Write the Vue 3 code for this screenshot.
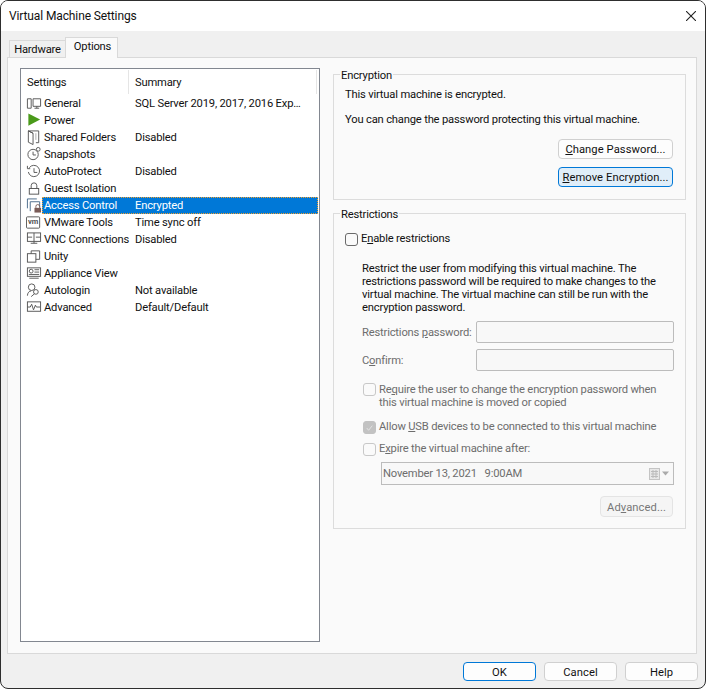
<script setup>
const rows = [
  { icon: 'general', name: 'General', summary: 'SQL Server 2019, 2017, 2016 Exp…' },
  { icon: 'power', name: 'Power', summary: '' },
  { icon: 'shared', name: 'Shared Folders', summary: 'Disabled' },
  { icon: 'snapshots', name: 'Snapshots', summary: '' },
  { icon: 'autoprotect', name: 'AutoProtect', summary: 'Disabled' },
  { icon: 'guest', name: 'Guest Isolation', summary: '' },
  { icon: 'access', name: 'Access Control', summary: 'Encrypted', selected: true },
  { icon: 'vmware', name: 'VMware Tools', summary: 'Time sync off' },
  { icon: 'vnc', name: 'VNC Connections', summary: 'Disabled' },
  { icon: 'unity', name: 'Unity', summary: '' },
  { icon: 'appliance', name: 'Appliance View', summary: '' },
  { icon: 'autologin', name: 'Autologin', summary: 'Not available' },
  { icon: 'advanced', name: 'Advanced', summary: 'Default/Default' },
]
</script>

<template>
  <div class="window">
    <header class="titlebar">
      <span class="title">Virtual Machine Settings</span>
      <svg class="close" width="10" height="10" viewBox="0 0 10 10">
        <path d="M0 0L10 10M10 0L0 10" stroke="#222" stroke-width="1.1" fill="none" />
      </svg>
    </header>

    <div class="body">
      <div class="tabs">
        <span class="tab">Hardware</span>
        <span class="tab active">Options</span>
      </div>

      <div class="panel">
        <div class="list">
          <div class="list-head">
            <span class="col-name">Settings</span>
            <span class="col-summary">Summary</span>
          </div>
          <div v-for="row in rows" :key="row.name" class="row">
            <span class="icon">
              <svg width="17" height="17" viewBox="0 0 17 17" fill="none" stroke="#555" stroke-width="1">
                <g v-if="row.icon === 'general'">
                  <path d="M1.500 3.500h4v10h-4zM7.500 3.500h8v8h-8zM9 13.500h5" />
                  <path d="M11.500 11.500v2" />
                </g>
                <path v-else-if="row.icon === 'power'" d="M2.500 1L15 7.500L2.500 14z" fill="#4a9a1a" stroke="none" />
                <g v-else-if="row.icon === 'shared'">
                  <path d="M2.500 1.500h11v12.500h-3M2.500 1.500v12l5 2.500v-12zM2.500 1.500l5 2.500" />
                  <path d="M10.500 4v7" stroke="#aaa" />
                </g>
                <g v-else-if="row.icon === 'snapshots'">
                  <circle cx="7.500" cy="8.500" r="5.500" />
                  <path d="M7.500 5.500v3.500h3" />
                  <circle cx="13" cy="3" r="2" fill="#fff" />
                </g>
                <g v-else-if="row.icon === 'autoprotect'">
                  <path d="M3.500 4.500A6 6 0 1 1 2.500 9M1.500 2.500v3h3" />
                  <path d="M8.500 5v4.500h3.500" />
                </g>
                <g v-else-if="row.icon === 'guest'">
                  <rect x="3.500" y="8.500" width="10" height="6" />
                  <path d="M5.500 8.500V5.500a3 3 0 0 1 6 0v3" />
                </g>
                <g v-else-if="row.icon === 'access'">
                  <path d="M1.500 11.500v-10h10M4.500 14.500v-10h10v6" stroke="#4a6a8a" />
                  <rect x="9" y="11" width="7" height="5" fill="#7a5c58" stroke="none" />
                  <path d="M10.500 11V9.500a2 2 0 0 1 4 0V11" stroke="#7a5c58" />
                </g>
                <g v-else-if="row.icon === 'vmware'">
                  <rect x="0.500" y="2.500" width="14" height="12" rx="1" />
                  <text x="7.500" y="10.500" class="vm-text" text-anchor="middle">vm</text>
                </g>
                <g v-else-if="row.icon === 'vnc'">
                  <rect x="1.500" y="1.500" width="14" height="9" />
                  <path d="M8.500 1.500v9M1.500 6h5M10.500 6h5M5 12.500h7M8.500 10.500v2" />
                </g>
                <g v-else-if="row.icon === 'unity'">
                  <rect x="1.500" y="5.500" width="9" height="9" />
                  <path d="M5.500 5.500v-3h9v9h-4" />
                </g>
                <g v-else-if="row.icon === 'appliance'">
                  <rect x="1.500" y="2.500" width="14" height="9" />
                  <circle cx="5.500" cy="6" r="2" />
                  <path d="M9 4.500h5M9 7h5M3 9.500h11M3.500 13.500h10" />
                </g>
                <g v-else-if="row.icon === 'autologin'">
                  <circle cx="6" cy="5" r="3.500" />
                  <path d="M1.500 14c0-3 2-5 4-5" />
                  <circle cx="10.500" cy="10" r="2.500" />
                  <path d="M9 12l-3.500 3" />
                </g>
                <g v-else-if="row.icon === 'advanced'">
                  <rect x="1.500" y="2.500" width="14" height="10" />
                  <path d="M1.500 8h3l1.500-3 2 6 2-5 1 2h4" />
                </g>
              </svg>
            </span>
            <span class="row-body" :class="{ selected: row.selected }">
              <span class="col-name">{{ row.name }}</span>
              <span class="col-summary">{{ row.summary }}</span>
            </span>
          </div>
        </div>

        <div class="side">
          <fieldset class="group encryption">
            <legend>Encryption</legend>
            <p>This virtual machine is encrypted.</p>
            <p class="second">You can change the password protecting this virtual machine.</p>
            <div class="enc-buttons">
              <button type="button" class="btn"><u>C</u>hange Password...</button>
              <button type="button" class="btn focused"><u>R</u>emove Encryption...</button>
            </div>
          </fieldset>

          <fieldset class="group restrictions">
            <legend>Restrictions</legend>
            <label class="check enable">
              <span class="box dark"></span>
              <span>E<u>n</u>able restrictions</span>
            </label>
            <div class="restrict-body">
              <p class="intro">Restrict the user from modifying this virtual machine. The<br>restrictions password will be required to make changes to the<br>virtual machine. The virtual machine can still be run with the<br>encryption password.</p>
              <div class="field first">
                <span class="off">Restrictions <u>p</u>assword:</span>
                <span class="input"></span>
              </div>
              <div class="field">
                <span class="off">C<u>o</u>nfirm:</span>
                <span class="input"></span>
              </div>
              <label class="check top require off">
                <span class="box"></span>
                <span>Re<u>q</u>uire the user to change the encryption password when<br>this virtual machine is moved or copied</span>
              </label>
              <label class="check usb off">
                <span class="box checked">
                  <svg width="12" height="12" viewBox="0 0 12 12"><path d="M3 6l2 2.500 4-5" fill="none" stroke="#e4e4e4" stroke-width="1" /></svg>
                </span>
                <span>Allow <u>U</u>SB devices to be connected to this virtual machine</span>
              </label>
              <label class="check expire off">
                <span class="box"></span>
                <span>E<u>x</u>pire the virtual machine after:</span>
              </label>
              <div class="date">
                <span class="date-text">November 13, 2021&nbsp;&nbsp; 9:00AM</span>
                <svg width="24" height="13" viewBox="0 0 24 13" fill="none">
                  <rect x="0.500" y="1.500" width="10" height="11" fill="#e8e8e8" stroke="#c4c4c4" />
                  <path d="M2 4.500h7M2 7h7M2 9.500h7M4 3v8M7 3v8" stroke="#bbb" />
                  <path d="M13 4.500h7l-3.500 4z" fill="#aaa" />
                </svg>
              </div>
              <div class="adv-row">
                <button type="button" class="btn disabled">Ad<u>v</u>anced...</button>
              </div>
            </div>
          </fieldset>
        </div>
      </div>
    </div>

    <footer class="footer">
      <button type="button" class="btn wide focused-ok">OK</button>
      <button type="button" class="btn wide">Cancel</button>
      <button type="button" class="btn wide">Help</button>
    </footer>
  </div>
</template>

<style scoped>
.window {
  width: 706px;
  height: 689px;
  box-sizing: border-box;
  display: flex;
  flex-direction: column;
  background: #f0f0f0;
  border: 1px solid #2e2e2e;
  border-radius: 8px;
  overflow: hidden;
  font-family: Roboto, "Open Sans", sans-serif;
  font-size: 11.2px;
  letter-spacing: -0.18px;
  color: #111;
}

.titlebar {
  height: 30px;
  flex: none;
  display: flex;
  align-items: center;
  justify-content: space-between;
  padding: 0 9px 0 8px;
  background: #fff;
}

.title {
  font-size: 12px;
  letter-spacing: -0.12px;
}

.body {
  flex: 1;
  display: flex;
  flex-direction: column;
  padding: 6px 8px 0 6px;
  min-height: 0;
}

.tabs {
  display: flex;
  height: 20px;
  padding-left: 2px;
  align-items: flex-end;
  position: relative;
  z-index: 1;
}

.tab {
  width: 57px;
  box-sizing: border-box;
  height: 17px;
  line-height: 17px;
  text-align: center;
  border: 1px solid #d9d9d9;
  border-bottom: none;
  background: #f0f0f0;
}

.tab.active {
  width: 53px;
  height: 21px;
  line-height: 18px;
  padding-left: 2px;
  margin-left: -1px;
  background: #fafafa;
  margin-bottom: -1px;
}

.panel {
  height: 597px;
  box-sizing: border-box;
  display: flex;
  gap: 13px;
  padding: 10px 10px 11px 12px;
  background: #fafafa;
  border: 1px solid #d9d9d9;
}

.list {
  width: 300px;
  flex: none;
  box-sizing: border-box;
  background: #fff;
  border: 1px solid #828790;
}

.list-head {
  height: 26px;
  display: flex;
  align-items: center;
}

.list-head .col-name,
.list-head .col-summary {
  height: 24px;
  line-height: 26px;
  box-sizing: border-box;
  border-right: 1px solid #e5e5e5;
  flex: none;
}

.list-head .col-name {
  width: 108px;
  padding-left: 6px;
}

.list-head .col-summary {
  width: 188px;
  padding-left: 6px;
}

.row {
  display: flex;
  height: 17px;
  align-items: center;
}

.icon {
  width: 21px;
  flex: none;
  display: flex;
  padding-left: 5px;
  box-sizing: border-box;
  overflow: visible;
}

.row-body {
  flex: 1;
  display: flex;
  height: 17px;
  line-height: 17px;
  margin-right: 1px;
  white-space: nowrap;
}

.row-body .col-name {
  width: 91px;
  flex: none;
  padding-left: 2px;
}

.row-body.selected {
  background: #0078d7;
  color: #fff;
  outline: 1px dotted #f0a030;
  outline-offset: -1px;
}

.vm-text {
  font-size: 8px;
  font-weight: 700;
  fill: #555;
  stroke: none;
}

.side {
  flex: 1;
  display: flex;
  flex-direction: column;
  gap: 6px;
  min-width: 0;
  margin-top: -1px;
}

.group {
  margin: 0;
  padding: 0 11px 0 11px;
  border: 1px solid #dcdcdc;
  min-width: 0;
}

.group legend {
  height: 14px;
  padding: 0 1px;
  margin-left: -5px;
  line-height: 18px;
}

.group p {
  margin: 0;
}

.encryption {
  height: 133px;
  box-sizing: border-box;
}

.encryption p {
  line-height: 16px;
  white-space: nowrap;
}

.encryption p:first-of-type {
  margin-top: 6px;
}

.encryption .second {
  margin-top: 9px;
}

.enc-buttons {
  display: flex;
  flex-direction: column;
  align-items: flex-end;
  gap: 8px;
  margin-top: 11px;
  padding-right: 1px;
}

.btn {
  width: 115px;
  height: 20px;
  padding: 2px 0 0;
  box-sizing: border-box;
  background: #fdfdfd;
  border: 1px solid #d0d0d0;
  border-radius: 4px;
  font-family: inherit;
  font-size: inherit;
  letter-spacing: 0.07px;
  color: #111;
  line-height: 16px;
}

.btn.focused {
  background: #e0eef9;
  border-color: #0078d7;
}

.restrictions {
  height: 323px;
  box-sizing: border-box;
}

.check {
  display: flex;
  align-items: center;
  gap: 3px;
  white-space: nowrap;
}

.check.top {
  align-items: flex-start;
}

.box {
  width: 13px;
  height: 13px;
  flex: none;
  display: flex;
  box-sizing: border-box;
  background: #fafafa;
  border: 1px solid #c8c8c8;
  border-radius: 3px;
}

.restrict-body .box {
  margin-left: 1px;
}

.box.dark {
  border-color: #6a6a6a;
}

.box.checked {
  background: #c2c2c2;
  border-color: #c2c2c2;
}

.enable {
  margin-top: 11px;
  line-height: 16px;
}

.restrict-body {
  padding-left: 17px;
  margin-top: 15px;
}

.intro {
  line-height: 13px;
  white-space: nowrap;
}

.off {
  color: #6d6d6d;
}

.field {
  display: flex;
  align-items: center;
  justify-content: space-between;
  margin-top: 6px;
  white-space: nowrap;
}

.field.first {
  margin-top: 7px;
}

.input {
  width: 198px;
  height: 22px;
  box-sizing: border-box;
  background: #f8f8f8;
  border: 1px solid #bcbcbc;
  border-radius: 2px;
}

.require {
  margin-top: 12px;
  line-height: 13px;
}

.usb {
  margin-top: 11px;
  line-height: 14px;
}

.expire {
  margin-top: 8px;
  line-height: 14px;
}

.date {
  height: 23px;
  box-sizing: border-box;
  margin: 6px 0 0 19px;
  padding: 0 0 0 1px;
  display: flex;
  align-items: center;
  justify-content: space-between;
  background: #f8f8f8;
  border: 1px solid #bcbcbc;
  color: #6d6d6d;
}

.adv-row {
  display: flex;
  justify-content: flex-end;
  margin-top: 11px;
  padding-right: 1px;
}

.btn.disabled {
  width: 73px;
  height: 21px;
  color: #777;
  background: #f5f5f5;
  border-color: #e4e4e4;
}

.footer {
  flex: none;
  height: 34px;
  display: flex;
  justify-content: flex-end;
  gap: 8px;
  padding: 8px 7px 0 0;
  box-sizing: border-box;
}

.btn.wide {
  width: 73px;
  height: 19px;
}

.btn.focused-ok {
  border-color: #0078d7;
  background: #fdfdfd;
}
</style>

<style>
html, body {
  margin: 0;
  background: #fff;
}
</style>
